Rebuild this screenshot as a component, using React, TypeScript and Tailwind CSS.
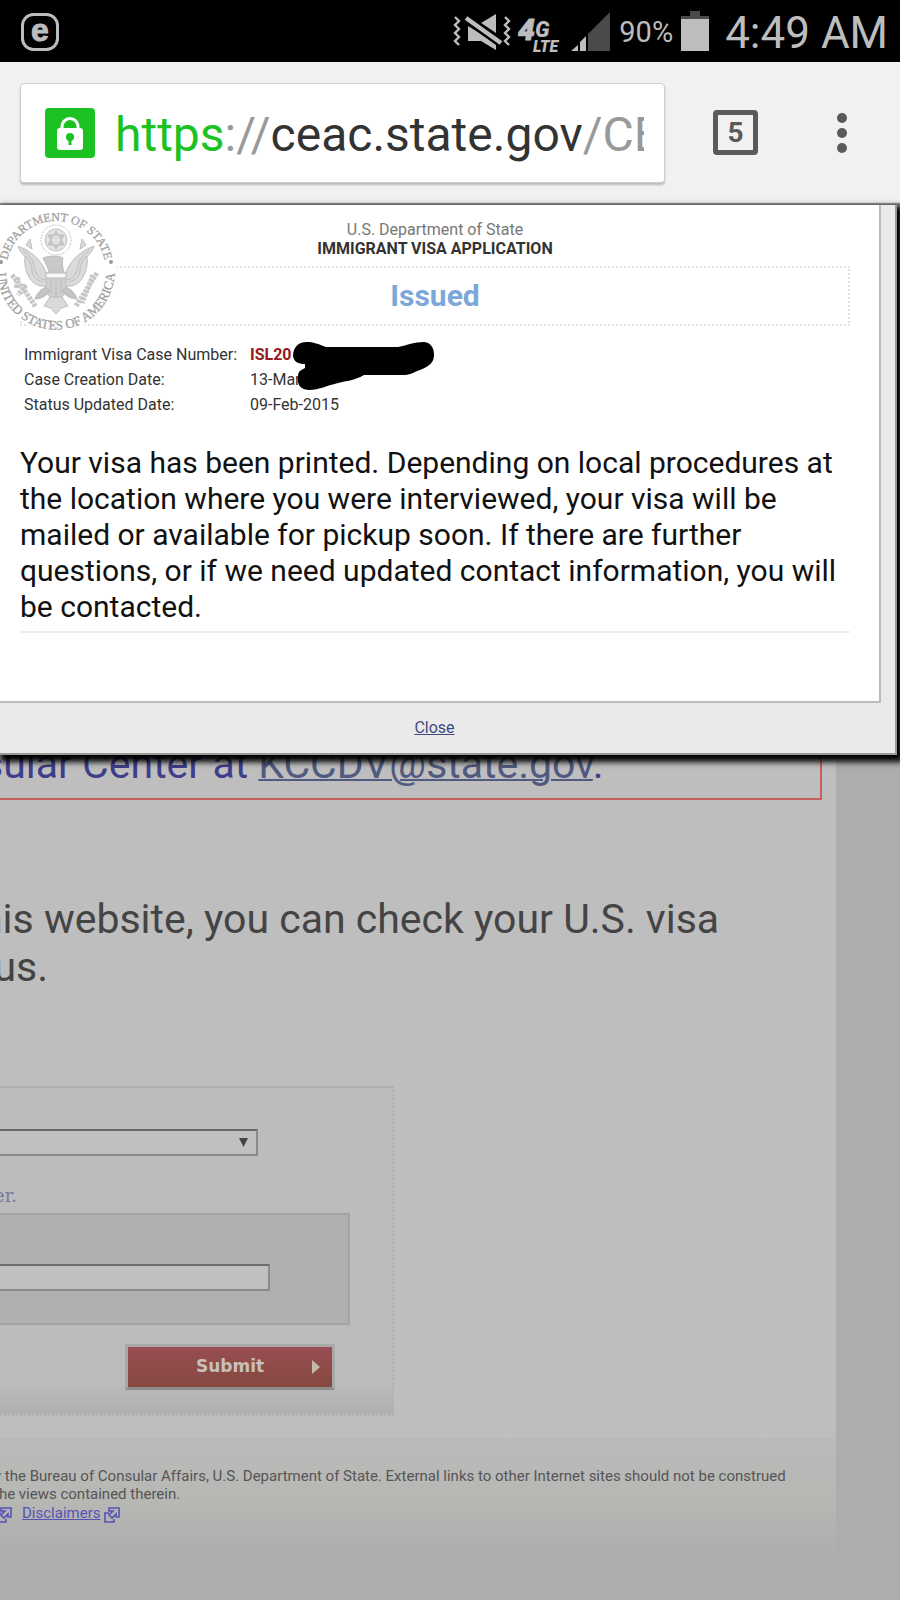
const StatusBar = () => {
  return (
    <header className="flex h-[62px] items-center bg-black px-3 text-[#bdbdbd]">
      <svg className="ml-2 h-10 w-10" viewBox="0 0 40 40" aria-label="Notification">
        <rect x="2.5" y="3.5" width="35" height="35" rx="11" fill="none" stroke="#bdbdbd" strokeWidth="3" />
        <text
          x="20"
          y="30"
          textAnchor="middle"
          fontFamily="Liberation Sans, sans-serif"
          fontSize="32"
          fontWeight="700"
          fill="#bdbdbd"
          stroke="#bdbdbd"
        >
          e
        </text>
      </svg>
      <div className="ml-auto flex items-center">
        <svg className="h-10 w-[58px]" viewBox="0 0 58 40" aria-label="Vibrate">
          <g fill="none" stroke="#bdbdbd" strokeWidth="2.4">
            <path d="M2 6l4 4-4 4 4 4-4 4 4 4-4 4 4 4" />
            <path d="M52 6l4 4-4 4 4 4-4 4 4 4-4 4 4 4" />
          </g>
          <path d="M43 3v19L28 12z M15 15v15h13l15 9V32z" fill="#bdbdbd" />
          <path d="M13 7l35 25" stroke="#000" strokeWidth="9" />
          <path d="M13 7l35 25" stroke="#bdbdbd" strokeWidth="4.5" />
        </svg>
        <svg className="ml-1 h-[50px] w-12" viewBox="0 0 48 50" aria-label="4G LTE">
          <g fontFamily="Roboto, sans-serif" fontStyle="italic" fill="#bdbdbd">
            <text x="3" y="34" fontSize="30" fontWeight="900" stroke="#bdbdbd">
              4
            </text>
            <text x="20" y="31" fontSize="22" fontWeight="900">
              G
            </text>
            <text x="18" y="46" fontSize="16" fontWeight="900">
              LTE
            </text>
          </g>
        </svg>
        <svg className="ml-2 h-10 w-10" viewBox="0 0 40 40" aria-label="Signal">
          <path d="M0 40l7-6v6z M9 40V31l6-6v15z" fill="#bdbdbd" />
          <path d="M17 40V23L39 1v39z" fill="#4a4a4a" />
        </svg>
        <span className="ml-2 mt-1 text-[29px]">90%</span>
        <svg className="ml-2 h-10 w-7" viewBox="0 0 28 40" aria-label="Battery">
          <path d="M9 0h10v5h9v4H0V5h9z" fill="#4a4a4a" />
          <path d="M0 8h28v32H0z" fill="#bdbdbd" />
        </svg>
        <span className="ml-4 mt-1 text-[44px]">4:49 AM</span>
      </div>
    </header>
  );
};

const BrowserBar = () => {
  return (
    <nav className="flex h-[143px] items-center border-b-2 border-[#9c9c9c] bg-[#f1f1f1] pl-5">
      <div className="flex h-[100px] min-w-0 flex-1 items-center rounded border border-[#cfcfcf] bg-white pl-6 pr-5 shadow-[0_2px_2px_#bbb]">
        <svg className="h-[50px] w-[50px] shrink-0" viewBox="0 0 50 50" aria-label="Secure">
          <rect width="50" height="50" rx="4" fill="#1cc222" />
          <path d="M17 22v-3.500a8 8 0 0 1 16 0V22" fill="none" stroke="#fff" strokeWidth="3" />
          <rect x="12" y="20" width="26" height="22" rx="3" fill="#fff" />
          <circle cx="25" cy="29" r="4" fill="#1cc222" />
          <path d="M23.500 30h3v7h-3z" fill="#1cc222" />
        </svg>
        <div
          role="textbox"
          aria-label="Address"
          className="ml-5 mt-1 min-w-0 flex-1 overflow-hidden whitespace-nowrap text-[48px] leading-[60px] text-[#999]"
        >
          <span className="text-[#1cc222]">https</span>://
          <span className="text-[#333]">ceac.state.gov</span>/CE
        </div>
      </div>
      <button
        aria-label="Open tabs"
        className="ml-12 flex h-[45px] w-[45px] items-center justify-center rounded border-[5px] border-[#5a5a5a] text-[28px] font-bold text-[#5a5a5a]"
      >
        5
      </button>
      <button aria-label="Menu" className="ml-16 mr-[38px] py-4">
        <svg className="h-10 w-10" viewBox="0 0 40 40" fill="#5a5a5a">
          <circle cx="20" cy="5" r="5" />
          <circle cx="20" cy="20" r="5" />
          <circle cx="20" cy="35" r="5" />
        </svg>
      </button>
    </nav>
  );
};

const Seal = () => {
  return (
    <svg
      className="absolute -left-1.5 top-1 h-[124px] w-[124px]"
      viewBox="-62 -62 124 124"
      aria-label="Department of State seal"
    >
      <circle r="61" fill="#fff" />
      <defs>
        <path id="sealTop" d="M-50 0A50 50 0 0 1 50 0" />
        <path id="sealBottom" d="M-56.500 -16A58.700 58.700 0 1 0 56.500 -16" />
      </defs>
      <g fontFamily="Liberation Serif, serif" fill="#a2a2a2" stroke="#a2a2a2" strokeWidth="0.3">
        <text textAnchor="middle" fontSize="12">
          <textPath href="#sealTop" startOffset="50%">
            DEPARTMENT OF STATE
          </textPath>
        </text>
        <text textAnchor="middle" fontSize="13">
          <textPath href="#sealBottom" startOffset="50%">
            UNITED STATES OF AMERICA
          </textPath>
        </text>
      </g>
      <circle cx="-55" cy="-9" r="2" fill="#999" />
      <circle cx="55" cy="-9" r="2" fill="#999" />
      <g stroke="#c2c2c2" fill="none">
        <circle cy="-31" r="15" strokeDasharray="2 1" />
        <circle cy="-31" r="11" fill="#e2e2e2" />
        <path d="M0-40l8 14H-8z M0-22l8-14H-8z" fill="#c4c4c4" />
      </g>
      <g fill="#dadada" stroke="#bcbcbc" strokeWidth="1">
        <path d="M-9 3C-14-8-20-18-38-25c2 6 5 8 7 11-1 10 2 18 6 23s10 7 16 6z" />
        <path d="M9 3C14-8 20-18 38-25c-2 6-5 8-7 11 1 10-2 18-6 23s-10 7-16 6z" />
        <path
          d="M-33-20c6 4 10 8 11 15s4 12 11 14 M-30-15c4 5 6 9 6 14s4 10 11 12 M33-20c-6 4-10 8-11 15s-4 12-11 14 M30-15c-4 5-6 9-6 14s-4 10-11 12"
          fill="none"
        />
        <path d="M-26-32l-4 6 6 4z M26-32l4 6-6 4z" />
        <path d="M-7 1c-2-8-6-12-6-14 5-2 14-3 20 0-1 4-1 8 1 14z" fill="#c9c9c9" />
        <path d="M-10 2h20v16c0 5-4 9-10 11-6-2-10-6-10-11z" fill="#d0d0d0" />
        <path d="M-10 2h20v5h-20z" fill="#f8f8f8" />
        <path d="M-5 8v15 M0 8v19 M5 8v15" />
        <path d="M-10 16c-5 2-9 6-11 12 6 0 11-3 15-8z M10 16c5 2 9 6 11 12-6 0-11-3-15-8z" fill="#c4c4c4" />
        <path d="M-6 26l-6 9 7 2 5 6 5-6 7-2-6-9z" />
      </g>
      <g stroke="#c6c6c6" strokeWidth="5" strokeDasharray="3 1">
        <path d="M-44 4l10 12 14 20 M-38 6l-2 12 M-30 14l-8 10" fill="none" />
        <path d="M41 2L20 35 M37 4L26 32" fill="none" />
      </g>
    </svg>
  );
};

const Scribble = () => {
  return (
    <svg className="absolute left-[292px] top-[136px] h-[52px] w-[144px]" viewBox="0 0 144 52" aria-hidden="true">
      <path
        d="M1 15C1 5 8 1 14 1c8 0 12 2 20 5h72c10-2 16-5 26-5 8 1 10 7 10 13 0 7-4 11-14 15-8 3-10 5-18 5H72c-8 5-18 6-26 8-12 3-20 7-28 7C8 49 5 43 6 36c0-6 3-7 7-9v-4C6 23 2 21 1 15z"
        fill="#000"
      />
    </svg>
  );
};

const details = [
  { label: "Immigrant Visa Case Number:", value: "ISL20", style: "font-bold text-[#951a1a]" },
  { label: "Case Creation Date:", value: "13-Mar", style: "" },
  { label: "Status Updated Date:", value: "09-Feb-2015", style: "" },
];

const StatusDialog = () => {
  return (
    <section
      role="dialog"
      aria-label="Immigrant visa status"
      className="absolute left-0 right-[3px] top-0 border-b-2 border-r-2 border-[#999] bg-[#eaeaea] pr-[14px] shadow-[3px_4px_6px_3px_#000]"
    >
      <div className="relative h-[498px] border-b-2 border-r-2 border-[#bbb] bg-white pl-5 pr-[29px] pt-[15px]">
        <div className="text-center text-base leading-[19px]">
          <p className="text-[#777]">U.S. Department of State</p>
          <h1 className="font-bold text-[#333]">IMMIGRANT VISA APPLICATION</h1>
        </div>
        <div className="mt-2 flex h-[60px] items-center justify-center border-2 border-dotted border-[#e2e2e2]">
          <h2 className="text-[30px] font-bold leading-9 text-[#7ba7d9]">Issued</h2>
        </div>
        <Seal />
        <dl className="mt-4 pl-1 text-base leading-[25px] text-[#333]">
          {details.map((item) => (
            <div key={item.label} className="flex">
              <dt className="w-[226px] whitespace-nowrap">{item.label}</dt>
              <dd className={item.style}>{item.value}</dd>
            </div>
          ))}
        </dl>
        <Scribble />
        <p className="mt-7 border-b-2 border-[#eee] pb-1.5 text-[30px] leading-9 text-[#111]">
          Your visa has been printed. Depending on local procedures at the location where you were interviewed, your
          visa will be mailed or available for pickup soon. If there are further questions, or if we need updated
          contact information, you will be contacted.
        </p>
      </div>
      <div className="flex h-[50px] items-center justify-center pr-3">
        <a href="#" className="text-base text-[#3d4a82] underline">
          Close
        </a>
      </div>
    </section>
  );
};

const ExternalIcon = () => {
  return (
    <svg
      className="ml-1 mt-1 inline h-4 w-4"
      viewBox="0 0 16 16"
      fill="none"
      stroke="#5552b5"
      strokeWidth="1.6"
      aria-hidden="true"
    >
      <path d="M5 1h10v9h-3V7L8 11 5 8l4-4H5z M5 6H1v9h9v-3" />
    </svg>
  );
};

const StatusForm = () => {
  return (
    <form
      className="-ml-4 mt-[95px] h-[330px] w-[410px] border-2 border-dotted border-[#b3b2a6] bg-linear-to-b from-[#bcbcbc] from-90% to-[#b0b0b0]"
      onSubmit={(e) => e.preventDefault()}
    >
      <div className="relative mt-[41px] w-[272px]">
        <select
          aria-label="Visa application type"
          className="block h-[27px] w-full appearance-none border-2 border-[#8a8a8a] border-t-[#686868] bg-[#c0c0c0]"
        />
        <svg className="pointer-events-none absolute right-[10px] top-[9px] h-[9px] w-[9px]" viewBox="0 0 9 9">
          <path d="M0 0h9L4.500 9z" fill="#444" />
        </svg>
      </div>
      <label
        htmlFor="caseNumber"
        className="mt-7 block h-[29px] pl-2 font-['DejaVu_Serif',serif] text-[18px] leading-6 text-[#77779a]"
      >
        er.
      </label>
      <div className="h-[112px] w-[364px] border-2 border-[#a3a3a3] bg-[#b0b0b0] pt-[49px]">
        <input
          id="caseNumber"
          type="text"
          className="block h-[27px] w-[282px] border-2 border-[#8a8a8a] border-t-[#6e6e6e] bg-[#c0c0c0]"
        />
      </div>
      <button
        type="submit"
        className="relative ml-[139px] mt-[19px] h-[46px] w-[210px] border-[3px] border-[#a8a8a6] border-b-[#8c8c8a] bg-linear-to-b from-[#984d52] to-[#85483f] font-['DejaVu_Sans',sans-serif] text-[17px] font-bold text-[#c9c0bc]"
      >
        Submit
        <svg className="absolute right-3 top-[13px] h-[14px] w-2" viewBox="0 0 8 14">
          <path d="M0 0l8 7-8 7z" fill="#c4b9ac" />
        </svg>
      </button>
    </form>
  );
};

const App = () => {
  return (
    <div className="flex min-h-screen flex-col overflow-hidden bg-[#adadad] font-[Roboto,sans-serif]">
      <StatusBar />
      <BrowserBar />
      <main className="relative flex-1">
        <div className="mr-16 bg-[#bebebe]">
          <div className="-ml-1 mr-[14px] flex h-[595px] items-end border-2 border-[#c75f5f] pb-2.5 text-[41px] leading-[48px] text-[#3e3e8c]">
            <p className="-ml-4">
              sular Center at{" "}
              <a href="#" className="text-[#515a80] underline decoration-2">
                KCCDV@state.gov
              </a>
              .
            </p>
          </div>
          <p className="-ml-5 mt-[95px] text-[41px] leading-[48px] text-[#444]">
            his website, you can check your U.S. visa
            <br />
            tus.
          </p>
          <StatusForm />
          <footer className="mt-[22px] h-[121px] bg-linear-to-b from-[#bababa] via-[#b7b7b4] to-[#adadad] pt-[29px] text-[15px] leading-[18px] text-[#555]">
            <p className="-ml-1.5">
              y the Bureau of Consular Affairs, U.S. Department of State. External links to other Internet sites should
              not be construed
              <br />
              the views contained therein.
            </p>
            <p className="-ml-2 flex items-center">
              <ExternalIcon />
              <a href="#" className="ml-[10px] text-[#5552b5] underline">
                Disclaimers
              </a>
              <ExternalIcon />
            </p>
          </footer>
        </div>
        <StatusDialog />
      </main>
    </div>
  );
};

export default App;
